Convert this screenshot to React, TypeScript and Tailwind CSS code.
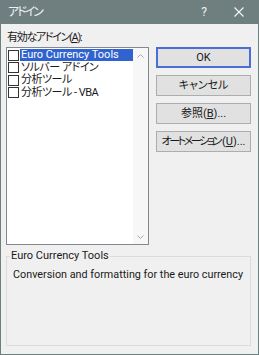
import React from "react";

const font = { fontFamily: 'Roboto, "Noto Sans CJK JP", sans-serif' };

function Check() {
  return <span className="inline-block w-[11px] h-[11px] border border-[#333] bg-white shrink-0 ml-[1px]" />;
}

export default function App() {
  const items = ["Euro Currency Tools", "ソルバー アドイン", "分析ツール", "分析ツール - VBA"];
  return (
    <div
      className="w-[259px] h-[355px] bg-[#6f7f80] px-[1px] pb-[1px] flex flex-col text-[11px] text-[#1a1a1a] [font-feature-settings:'palt']"
      style={font}
    >
      <div className="h-[24px] flex items-center text-[#eef1f1] shrink-0">
        <span className="pl-[7px] text-[12px] tracking-[-2px] flex-1">アドイン</span>
        <span className="text-[12px] mr-[27px]">?</span>
        <span className="flex mr-[14px]">
          <svg width="10" height="10" viewBox="0 0 10 10">
            <path d="M0.5 0.5L9.5 9.5M9.5 0.5L0.5 9.5" stroke="#f2f2f2" strokeWidth="1.2" />
          </svg>
        </span>
      </div>
      <div className="flex-1 bg-[#f0f0f0] flex flex-col pl-[5px] pr-[6px] pb-[8px]">
        <div className="h-[23px] pt-[7px] leading-[14px] pl-[1px] tracking-[-1.3px]">
          有効なアドイン(<span className="underline">A</span>):
        </div>
        <div className="flex">
          <div className="w-[143px] h-[198px] border border-[#828790] bg-white flex shrink-0">
            <div className="flex-1 pt-[1px]">
              {items.map((t, i) => (
                <div key={i} className="h-[12.5px] flex items-center gap-[1px]">
                  <Check />
                  <span
                    className={
                      "h-[12px] leading-[12px] pl-[1px] flex-1 whitespace-nowrap " +
                      (i === 0 ? "bg-[#3063cf] text-white" : "tracking-[-0.5px]")
                    }
                  >
                    {t}
                  </span>
                </div>
              ))}
            </div>
            <div className="w-[15px] bg-[#f7f7f7] flex flex-col justify-between items-center pt-[6px] pb-[5px]">
              <svg width="7" height="4" viewBox="0 0 7 4">
                <path d="M0.5 3.5L3.5 0.5L6.5 3.5" stroke="#a6a6a6" fill="none" />
              </svg>
              <svg width="7" height="4" viewBox="0 0 7 4">
                <path d="M0.5 0.5L3.5 3.5L6.5 0.5" stroke="#a6a6a6" fill="none" />
              </svg>
            </div>
          </div>
          <div className="flex flex-col ml-[7px] gap-[7px]">
            <button className="w-[95px] h-[21px] border-2 border-[#4a6ed6] bg-[#e1e1e1] leading-none">OK</button>
            <button className="w-[95px] h-[21px] border border-[#adadad] bg-[#e1e1e1] leading-none">キャンセル</button>
            <button className="w-[95px] h-[21px] border border-[#adadad] bg-[#e1e1e1] leading-none">
              参照(<span className="underline">B</span>)...
            </button>
            <button className="w-[95px] h-[21px] border border-[#adadad] bg-[#e1e1e1] leading-none whitespace-nowrap">
              <span className="tracking-[-2.4px]">オートメーション</span>
              <span className="ml-[2px]">(<span className="underline">U</span>)...</span>
            </button>
          </div>
        </div>
        <div className="relative mt-[11px] h-[90px] border border-[#dcdcdc] mr-[1px]">
          <span className="absolute -top-[8px] left-[3px] bg-[#f0f0f0] px-[1px] leading-[14px]">Euro Currency Tools</span>
          <div className="pt-[11px] pl-[6px] leading-[14px] whitespace-nowrap text-[10.8px]">Conversion and formatting for the euro currency</div>
        </div>
      </div>
    </div>
  );
}
